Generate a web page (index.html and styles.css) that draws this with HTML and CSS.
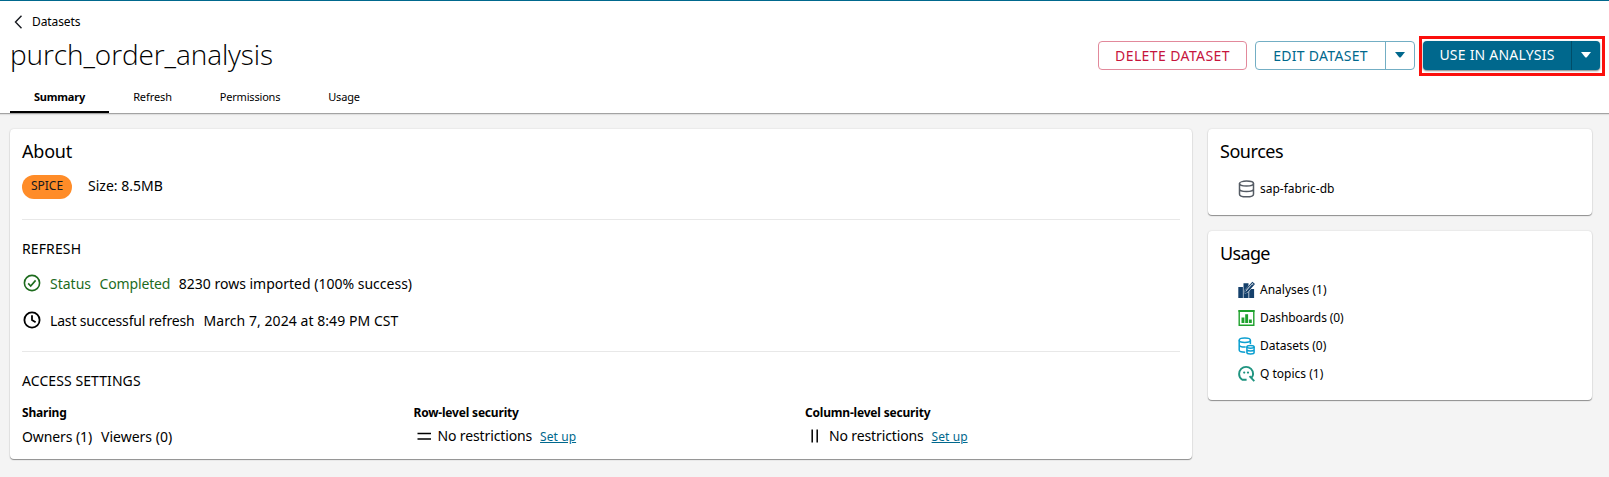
FILE: index.html
```html
<!DOCTYPE html>
<html lang="en">
<head>
<meta charset="utf-8">
<title>purch_order_analysis</title>
<link rel="stylesheet" href="styles.css">
</head>
<body>
<header class="header">
  <a class="crumb"><svg class="crumb-icon" width="10" height="14" viewBox="0 0 10 14"><path d="M8.500.8 2.500 7l6 6.200" fill="none" stroke="#16191f" stroke-width="1.4"/></svg><span>Datasets</span></a>
  <div class="title-row">
    <h1 class="title">purch_order_analysis</h1>
    <div class="actions">
      <button class="btn btn-delete">DELETE DATASET</button>
      <div class="split split-edit"><button class="btn-main edit-label">EDIT DATASET</button><button class="btn-caret"><svg width="10" height="6" viewBox="0 0 10 6"><path d="M0 0h10L5.8 5.2q-.8.8-1.6 0z" fill="#00688d"/></svg></button></div>
      <div class="highlight"><div class="split split-use"><button class="btn-main use-label">USE IN ANALYSIS</button><button class="btn-caret"><svg width="10" height="6" viewBox="0 0 10 6"><path d="M0 0h10L5.8 5.2q-.8.8-1.6 0z" fill="#fff"/></svg></button></div></div>
    </div>
  </div>
  <nav class="tabs">
    <a class="tab tab-summary active">Summary</a>
    <a class="tab tab-refresh">Refresh</a>
    <a class="tab tab-permissions">Permissions</a>
    <a class="tab tab-usage">Usage</a>
  </nav>
</header>
<main class="content">
  <section class="card about">
    <h2 class="card-title">About</h2>
    <div class="size-row"><span class="pill">SPICE</span><span class="size">Size: 8.5MB</span></div>
    <h3 class="section-title refresh-title">REFRESH</h3>
    <div class="status-row">
      <svg width="18" height="18" viewBox="0 0 18 18" fill="none" stroke="#1d6b1d" stroke-width="1.6"><circle cx="9" cy="9" r="7.6"/><path d="m5.2 9.4 2.5 2.6 4.9-5.6"/></svg>
      <span class="green">Status</span><span class="green completed">Completed</span><span>8230 rows imported (100% success)</span>
    </div>
    <div class="status-row last-row">
      <svg width="18" height="18" viewBox="0 0 18 18" fill="none" stroke="#000" stroke-width="1.8"><circle cx="9" cy="9" r="7.6"/><path d="M9 4.2V9l3.6 2.2"/></svg>
      <span class="last-label">Last successful refresh</span><span class="last-date">March 7, 2024 at 8:49 PM CST</span>
    </div>
    <h3 class="section-title access-title">ACCESS SETTINGS</h3>
    <div class="access">
      <div><h4 class="access-head">Sharing</h4><div class="access-row sharing"><span class="owners">Owners (1)</span><span>Viewers (0)</span></div></div>
      <div><h4 class="access-head">Row-level security</h4><div class="access-row"><svg class="bars" width="20" height="16" viewBox="0 0 20 16"><path d="M3.500 5.500H17M3.500 11H17" stroke="#000" stroke-width="1.5"/></svg><span class="restrict">No restrictions</span><a class="link">Set up</a></div></div>
      <div><h4 class="access-head">Column-level security</h4><div class="access-row"><svg class="bars" width="20" height="16" viewBox="0 0 20 16"><path d="M7.200 1.500v13M12.200 1.500v13" stroke="#000" stroke-width="1.5"/></svg><span class="restrict">No restrictions</span><a class="link">Set up</a></div></div>
    </div>
  </section>
  <aside class="side">
    <section class="card sources">
      <h2 class="card-title sources-title">Sources</h2>
      <div class="item">
        <svg width="17" height="18" viewBox="0 0 17 18" fill="none" stroke="#545b64" stroke-width="1.5"><ellipse cx="8.5" cy="3.6" rx="7" ry="2.5"/><path d="M1.5 3.6v10.6c0 1.5 3 2.6 7 2.6s7-1.100 7-2.600V3.600M1.500 9c0 1.500 3 2.500 7 2.500s7-1 7-2.500"/></svg>
        <span>sap-fabric-db</span>
      </div>
    </section>
    <section class="card usage">
      <h2 class="card-title usage-title">Usage</h2>
      <div class="item">
        <svg width="17" height="18" viewBox="0 0 17 18"><path d="M.3 6h4.600v11H.3zM5.500 2.200h5v14.800h-5zM11.200 8h4.900v9h-4.900z" fill="#15406b"/><path d="m5.600 13.300 1.500-4.800 7.200-8 3 2.700-7.300 8.200z" fill="#fff"/><path d="m6.600 12.200.9-3.200 6.900-7.600 1.800 1.600-6.800 7.700zM8 11l6.600-7.400" fill="#fff" stroke="#15406b" stroke-width="1.100"/></svg>
        <span>Analyses (1)</span>
      </div>
      <div class="item">
        <svg width="17" height="18" viewBox="0 0 17 18"><path d="M1.200 1.700h14.600v14.600H1.200z" fill="none" stroke="#1ea12d" stroke-width="1.400"/><path d="M.5 1h16v2H.5zM3.500 8.600h2.900v5.400H3.500zM7.200 5.200h2.900V14H7.200zM10.900 10.500h2.900V14h-2.900z" fill="#1ea12d"/></svg>
        <span class="dash">Dashboards (0)</span>
      </div>
      <div class="item">
        <svg width="17" height="18" viewBox="0 0 17 18" fill="none" stroke="#0b9fd0" stroke-width="1.500"><ellipse cx="6.800" cy="3.200" rx="5.600" ry="2.200"/><path d="M1.200 3.200v9.800c0 1.200 2.300 2.200 6 2.200M12.400 3.200v3.900M1.200 8.200c.4 1.200 3 2 6.500 1.900"/><ellipse cx="12.500" cy="9.800" rx="3.600" ry="1.400"/><path d="M8.900 9.800v5.600c0 .8 1.600 1.500 3.600 1.500s3.600-.7 3.600-1.500V9.800M8.900 12.800c.4.700 1.800 1.200 3.600 1.200s3.200-.5 3.600-1.200"/></svg>
        <span>Datasets (0)</span>
      </div>
      <div class="item">
        <svg width="17" height="18" viewBox="0 0 17 18" fill="none" stroke="#1f9480" stroke-width="1.900"><path d="M8.600 14.700H4.300c-2-1.200-3.200-3.500-3.200-5.700 0-4 3.100-7.100 7-7.100s7 3.100 7 7.100c0 1.400-.6 2.600-1.500 3.600M11.500 11.200l4.800 5"/><circle cx="6.200" cy="7.600" r="1.100" fill="#1f9480" stroke="none"/><circle cx="10" cy="7.600" r="1.100" fill="#1f9480" stroke="none"/></svg>
        <span>Q topics (1)</span>
      </div>
    </section>
  </aside>
</main>
</body>
</html>
```
FILE: styles.css
```css
* { box-sizing: border-box; }
body {
  margin: 0;
  height: 477px;
  overflow: hidden;
  background: #f4f4f4;
  color: #000;
  font-family: "Noto Sans", sans-serif;
  font-size: 14px;
  line-height: 20px;
}
h1, h2, h3, h4 { margin: 0; font-weight: 400; }
svg { display: block; flex: none; }
button { font: inherit; padding: 0; background: none; border: 0; color: inherit; }

.header {
  height: 114px;
  background: #fff;
  border-top: 1px solid #00688d;
  border-bottom: 1px solid #a3a3a3;
  box-shadow: 0 1px 1px rgba(0, 0, 0, .08);
}
.crumb {
  display: flex;
  align-items: center;
  height: 40px;
  padding: 2px 0 0 13px;
  gap: 9px;
  font-size: 12px;
  letter-spacing: -.1px;
}
.title-row {
  display: flex;
  justify-content: space-between;
  height: 29px;
  padding: 0 9px 0 10px;
}
.title {
  font-family: "Open Sans", sans-serif;
  font-weight: 300;
  font-size: 28px;
  line-height: 27px;
  letter-spacing: -.1px;
}
.actions { display: flex; gap: 8px; height: 29px; line-height: 27px; }
.btn-delete {
  width: 149px;
  padding-bottom: 2px;
  border: 1px solid #e2899b;
  border-radius: 4px;
  color: #c7153d;
  letter-spacing: .4px;
}
.split { display: flex; height: 29px; border-radius: 4px; }
.btn-main { flex: 1; padding-bottom: 2px; }
.btn-caret {
  display: flex;
  width: 29px;
  padding-bottom: 1px;
  align-items: center;
  justify-content: center;
}
.split-edit { width: 160px; border: 1px solid #73aec4; color: #00688d; }
.split-edit .btn-caret { border-left: 1px solid #73aec4; }
.edit-label { letter-spacing: .3px; }
.split-use {
  width: 177px;
  background: #00688d;
  color: #fff;
  box-shadow: 0 1px 2px rgba(0, 0, 0, .5);
}
.split-use .btn-caret { border-left: 1px solid #004d69; }
.use-label { letter-spacing: .22px; }
.highlight { position: relative; }
.highlight::after {
  content: "";
  position: absolute;
  inset: -5px -5px -6px -4px;
  border: 3px solid #fb0f0c;
  pointer-events: none;
}

.tabs { display: flex; margin: 13px 0 0 10px; height: 30px; }
.tab {
  height: 30px;
  line-height: 28px;
  font-size: 11px;
  text-align: center;
  letter-spacing: -.1px;
}
.tab-summary { width: 99px; font-weight: 700; letter-spacing: -.2px; }
.tab-refresh { width: 87px; }
.tab-permissions { width: 108px; letter-spacing: -.18px; }
.tab-usage { width: 80px; letter-spacing: -.2px; }
.active { border-bottom: 2px solid #000; }

.content {
  display: grid;
  grid-template-columns: 1182px 384px;
  gap: 16px;
  align-items: start;
  padding: 15px 0 0 10px;
}
.card {
  background: #fff;
  border-radius: 4px;
  padding: 12px;
  box-shadow: 0 1px 1px rgba(0, 0, 0, .4), 0 0 2px rgba(0, 0, 0, .14);
}
.card-title { font-size: 18px; line-height: 20px; letter-spacing: -.2px; }
.about { height: 330px; }
.size-row {
  display: flex;
  align-items: center;
  gap: 16px;
  height: 24px;
  margin-top: 14px;
}
.size { padding-bottom: 2px; }
.pill {
  width: 50px;
  height: 24px;
  border-radius: 12px;
  background: #ff8c28;
  color: #16191f;
  font-size: 12px;
  line-height: 22px;
  text-align: center;
}
.section-title { border-top: 1px solid #e8e8e8; font-size: 14px; }
.refresh-title { margin-top: 20px; padding-top: 19px; letter-spacing: .12px; }
.status-row {
  display: flex;
  align-items: center;
  height: 20px;
  margin-top: 15px;
  padding-left: 1px;
}
.status-row svg { margin: 0 9px 2px 0; }
.green { color: #1d6b1d; margin-right: 8.5px; }
.completed { letter-spacing: -.15px; }
.last-row { margin-top: 17px; }
.last-label { letter-spacing: -.17px; margin-right: 9px; }
.last-date { letter-spacing: .06px; }
.access-title { margin-top: 20px; padding-top: 19px; letter-spacing: .08px; }
.access { display: grid; grid-template-columns: 391.5px 391.5px 1fr; margin-top: 12px; }
.access-head {
  font-size: 12px;
  font-weight: 700;
  line-height: 20px;
  letter-spacing: -.19px;
}
.access-row { display: flex; align-items: center; height: 20px; margin-top: 3px; }
.sharing { margin-top: 4px; }
.owners { letter-spacing: -.1px; margin-right: 9px; }
.bars { margin-right: 4px; }
.restrict { letter-spacing: -.13px; margin-right: 8px; }
.link { padding-top: 1px; color: #00688d; font-size: 12px; letter-spacing: .07px; text-decoration: underline; }

.side { display: grid; gap: 16px; }
.sources { height: 86px; }
.usage { height: 169px; }
.sources-title { letter-spacing: -.45px; margin-bottom: 18px; }
.usage-title { letter-spacing: -.65px; margin-bottom: 17px; }
.item {
  display: flex;
  align-items: center;
  gap: 5.5px;
  height: 20px;
  padding-left: 17.5px;
  font-size: 12px;
}
.item + .item { margin-top: 8px; }
.dash { letter-spacing: -.11px; }
```
